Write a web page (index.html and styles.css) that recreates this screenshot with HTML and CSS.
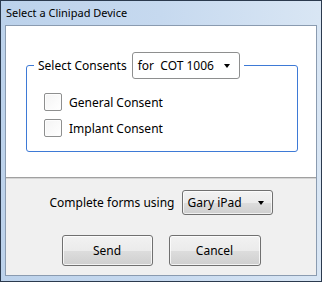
FILE: index.html
```html
<!DOCTYPE html>
<html>
<head>
<meta charset="utf-8">
<link rel="stylesheet" href="styles.css">
</head>
<body>
<div class="window">
  <div class="titlebar">Select a Clinipad Device</div>
  <div class="client">
    <div class="top">
      <fieldset class="group">
        <legend class="legend">
          <span class="legend-text">Select Consents</span>
          <div class="combo combo-white combo-consent">
            <span class="combo-text">for&nbsp; COT 1006</span>
            <span class="arrow"></span>
          </div>
        </legend>
        <div class="check-row">
          <span class="checkbox"></span>
          <span class="check-label">General Consent</span>
        </div>
        <div class="check-row">
          <span class="checkbox"></span>
          <span class="check-label">Implant Consent</span>
        </div>
      </fieldset>
    </div>
    <div class="separator"></div>
    <div class="bottom">
      <div class="form-row">
        <span class="form-label">Complete forms using</span>
        <div class="combo combo-button combo-device">
          <span class="combo-text">Gary iPad</span>
          <span class="arrow"></span>
        </div>
      </div>
      <div class="button-row">
        <div class="button button-send">Send</div>
        <div class="button button-cancel">Cancel</div>
      </div>
    </div>
  </div>
</div>
</body>
</html>
```

FILE: styles.css
```css
html, body {
  margin: 0;
  padding: 0;
}

body {
  font-family: "Noto Sans", "Open Sans", sans-serif;
  font-size: 12px;
  color: #000;
  background: #fff;
}

.window {
  width: 322px;
  height: 282px;
  box-sizing: border-box;
  border: 1px solid #2b3a4e;
  background: linear-gradient(to right, #bcd2eb 0%, #c6d9ef 50%, #d9e6f4 100%);
  padding: 0 4px 5px 4px;
  display: flex;
  flex-direction: column;
}

.titlebar {
  height: 24px;
  line-height: 24px;
  padding-left: 1px;
  font-size: 11px;
  color: #000;
  white-space: nowrap;
}

.client {
  flex: 1;
  border: 1px solid #8a9bb0;
  display: flex;
  flex-direction: column;
  background: #f0f0f0;
}

.top {
  height: 151px;
  background: #fff;
  padding-top: 26px;
  box-sizing: border-box;
}

.group {
  margin: 0 18px 0 20px;
  padding: 0;
  border: 1px solid #3e7ad6;
  border-radius: 3px;
  box-sizing: border-box;
  height: 100px;
  min-width: 0;
}

.legend {
  margin-left: 7px;
  padding: 0 4px;
  display: flex;
  align-items: center;
  gap: 5px;
}

.legend-text {
  white-space: nowrap;
  font-size: 12px;
}

.combo {
  box-sizing: border-box;
  display: flex;
  align-items: center;
  justify-content: space-between;
  border-radius: 3px;
  white-space: nowrap;
  flex-shrink: 0;
}

.combo-white {
  border: 1px solid #8e8f8f;
  background: #fff;
}

.combo-consent {
  width: 108px;
  height: 27px;
  padding: 0 9px 0 5px;
  font-size: 12px;
}

.combo-button {
  border: 1px solid #707070;
  background: linear-gradient(to bottom, #f2f2f2 0%, #ebebeb 50%, #dddddd 51%, #cfcfcf 100%);
  box-shadow: inset 0 0 0 1px rgba(255,255,255,0.7);
}

.combo-device {
  width: 91px;
  height: 25px;
  padding: 0 8px 0 5px;
  font-size: 12px;
}

.arrow {
  width: 0;
  height: 0;
  border-left: 3.5px solid transparent;
  border-right: 3.5px solid transparent;
  border-top: 4px solid #000;
}

.check-row {
  display: flex;
  align-items: center;
  margin-left: 17px;
  height: 18px;
  margin-top: 8px;
}

.check-row:first-of-type {
  margin-top: 14px;
}

.checkbox {
  width: 18px;
  height: 18px;
  box-sizing: border-box;
  border: 1px solid #8e8f8f;
  border-radius: 2px;
  background: linear-gradient(135deg, #f4f4f4 0%, #ffffff 100%);
  box-shadow: inset 0 0 0 1px #fdfdfd;
}

.check-label {
  margin-left: 7px;
  font-size: 12px;
  white-space: nowrap;
}

.separator {
  height: 2px;
  background: #a0a0a0;
  border-bottom: 1px solid #d5d5d5;
  box-sizing: border-box;
}

.bottom {
  flex: 1;
  display: flex;
  flex-direction: column;
  align-items: center;
  padding-top: 11px;
}

.form-row {
  display: flex;
  align-items: center;
  gap: 7px;
  height: 25px;
}

.form-label {
  font-size: 12px;
  white-space: nowrap;
}

.button-row {
  display: flex;
  gap: 16px;
  margin-top: 20px;
}

.button {
  box-sizing: border-box;
  width: 91px;
  height: 31px;
  border: 1px solid #707070;
  border-radius: 3px;
  background: linear-gradient(to bottom, #f2f2f2 0%, #ebebeb 50%, #dddddd 51%, #cfcfcf 100%);
  box-shadow: inset 0 0 0 1px rgba(255,255,255,0.75);
  display: flex;
  align-items: center;
  justify-content: center;
  font-size: 12px;
}

.button-cancel {
  width: 92px;
}
```
